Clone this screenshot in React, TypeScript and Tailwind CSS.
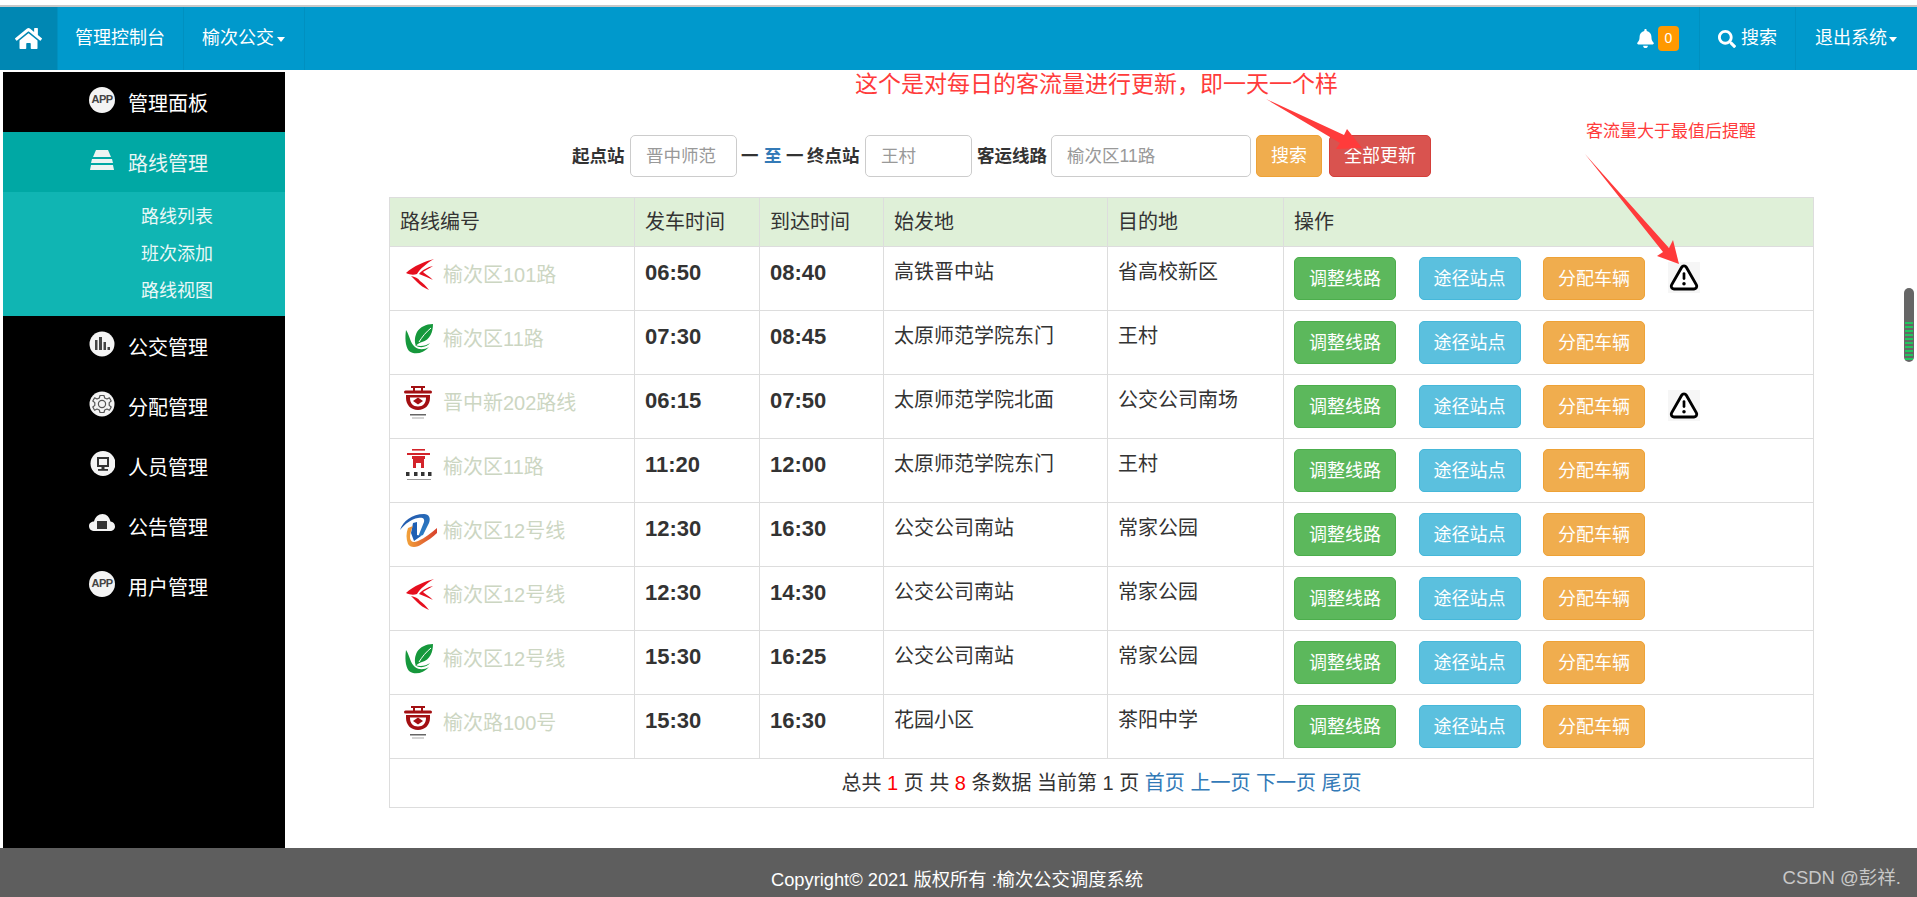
import { FaHome, FaBell, FaSearch } from "react-icons/fa";

type LogoKind = "wing" | "leaf" | "seal" | "gate" | "swirl";

const routes: { logo: LogoKind; name: string; start: string; end: string; from: string; to: string; warn?: boolean }[] = [
  { logo: "wing", name: "榆次区101路", start: "06:50", end: "08:40", from: "高铁晋中站", to: "省高校新区", warn: true },
  { logo: "leaf", name: "榆次区11路", start: "07:30", end: "08:45", from: "太原师范学院东门", to: "王村" },
  { logo: "seal", name: "晋中新202路线", start: "06:15", end: "07:50", from: "太原师范学院北面", to: "公交公司南场", warn: true },
  { logo: "gate", name: "榆次区11路", start: "11:20", end: "12:00", from: "太原师范学院东门", to: "王村" },
  { logo: "swirl", name: "榆次区12号线", start: "12:30", end: "16:30", from: "公交公司南站", to: "常家公园" },
  { logo: "wing", name: "榆次区12号线", start: "12:30", end: "14:30", from: "公交公司南站", to: "常家公园" },
  { logo: "leaf", name: "榆次区12号线", start: "15:30", end: "16:25", from: "公交公司南站", to: "常家公园" },
  { logo: "seal", name: "榆次路100号", start: "15:30", end: "16:30", from: "花园小区", to: "茶阳中学" },
];

function Logo({ kind }: { kind: LogoKind }) {
  return (
    <svg viewBox="0 0 37 36" className="w-[37px] h-[36px] shrink-0">
      {kind === "wing" && (
        <g fill="#e60f1e">
          <path d="M34 2C26 4 13 9 6 16C10 18 14 18 17 17C20 12 27 6 34 2Z" />
          <path d="M33 9C28 10 22 13 19 17C24 19 29 21 33 23C29 19 25 17 23 15C26 13 30 11 33 9Z" />
          <path d="M11 19C15 20 18 21 20 24C23 26 26 29 29 33C24 31 20 28 17 25C15 23 13 21 11 19Z" />
        </g>
      )}
      {kind === "leaf" && (
        <g fill="#16983c">
          <path d="M17 11C20 6 26 3 33 3C33 11 30 19 22 21C19 22 17 23 16 25C14 20 15 15 17 11Z" />
          <path d="M19 21C22 16 26 11 31 7" stroke="#fff" strokeWidth="1" fill="none" />
          <path d="M6 9C5 16 5 25 9 30C14 34 23 33 29 26C24 29 19 29 15 26C10 22 10 15 6 9Z" />
          <path d="M15 24C20 26 26 25 30 22C27 26 20 28 15 24Z" />
        </g>
      )}
      {kind === "seal" && (
        <g fill="#a30f12">
          <rect x="11" y="1" width="14" height="2" />
          <rect x="4" y="5.500" width="28" height="3" rx="1.500" />
          <rect x="13" y="3" width="2" height="3" />
          <rect x="21" y="3" width="2" height="3" />
          <path d="M6 10H30V13C30 20 25 25 18 25C11 25 6 20 6 13ZM10 12.500V13C10 18 13 21.500 18 21.500C23 21.500 26 18 26 13V12.500Z" />
          <path d="M18 12.500L23 16L18 19.500L13 16Z" />
          <rect x="10" y="29" width="16" height="1.500" fill="#666" />
          <rect x="12" y="32.500" width="12" height="1" fill="#aaa" />
        </g>
      )}
      {kind === "gate" && (
        <g>
          <g fill="#d3232a">
            <rect x="12" y="0" width="13" height="1.600" />
            <rect x="7" y="4" width="23" height="2" />
            <rect x="12" y="7" width="13" height="3" />
            <path d="M13 10H24V19H21V14H16V19H13Z" />
          </g>
          <g fill="#333">
            <rect x="6" y="23" width="3.500" height="4" />
            <rect x="14" y="23" width="3.500" height="4" />
            <rect x="21" y="23" width="3.500" height="4" />
            <rect x="28" y="23" width="3.500" height="4" />
            <rect x="7" y="30" width="24" height="1" fill="#999" />
          </g>
        </g>
      )}
      {kind === "swirl" && (
        <g>
          <defs>
            <linearGradient id="swirlBlue" x1="0" y1="0" x2="1" y2="1">
              <stop offset="0" stopColor="#1f4fa8" />
              <stop offset="1" stopColor="#2f86c9" />
            </linearGradient>
            <linearGradient id="swirlOrange" x1="0" y1="0" x2="1" y2="0">
              <stop offset="0" stopColor="#f2a33a" />
              <stop offset="1" stopColor="#d8402c" />
            </linearGradient>
          </defs>
          <path d="M0 17C3 8 12 1 24 1C29 1 31 5 29 10L23 22L18 24L24 9C25 5 22 4 18 5C11 6 5 11 0 17Z" fill="url(#swirlBlue)" />
          <path d="M13 10L17 9L17 22L21 23L14 28L11 20Z" fill="#1f5fb3" />
          <path d="M8 15C6 20 6 26 8 31C10 35 17 35 22 31C27 28 33 24 37 20L37 15C31 20 25 25 18 28C13 30 11 29 10 25C10 21 11 17 13 13Z" fill="url(#swirlOrange)" />
        </g>
      )}
    </svg>
  );
}

function AppIcon() {
  return (
    <div className="w-[26px] h-[26px] rounded-full bg-[#f4f4f4] flex items-center justify-center text-[11px] font-bold text-[#444] leading-none tracking-[-0.5px]">
      APP
    </div>
  );
}

function SideIcon({ kind }: { kind: string }) {
  if (kind === "app") return <AppIcon />;
  return (
    <svg viewBox="0 0 26 26" className="w-[26px] h-[26px]">
      {kind === "stack" && (
        <g fill="#eef4f2">
          <path d="M7 3H19L22 10H4Z" />
          <path d="M3 12H23L24 16H2Z" />
          <path d="M2 18H24L25 23H1Z" />
        </g>
      )}
      {kind === "chart" && (
        <g>
          <circle cx="13" cy="13" r="12.500" fill="#f4f4f4" />
          <g fill="#444">
            <rect x="6" y="9" width="2.500" height="10" />
            <rect x="10" y="6" width="3" height="13" />
            <rect x="14.500" y="11" width="2.500" height="8" />
            <rect x="18.500" y="16" width="2.500" height="3" />
          </g>
        </g>
      )}
      {kind === "gear" && (
        <g>
          <circle cx="13" cy="13" r="12.500" fill="#f4f4f4" />
          <path d="M11 4.500H15L15.700 7L18 8L20.400 6.800L22.200 10L20.200 11.600V14.400L22.200 16L20.400 19.200L18 18L15.700 19L15 21.500H11L10.300 19L8 18L5.600 19.200L3.800 16L5.800 14.400V11.600L3.800 10L5.600 6.800L8 8L10.300 7Z" fill="none" stroke="#555" strokeWidth="1.200" strokeLinejoin="round" />
          <circle cx="13" cy="13" r="3.600" fill="none" stroke="#555" strokeWidth="1.200" />
        </g>
      )}
      {kind === "monitor" && (
        <g>
          <circle cx="14" cy="12.500" r="12.500" fill="#f4f4f4" />
          <path d="M8 6H20V16H8ZM10 8V14H18V8Z" fill="#333" fillRule="evenodd" />
          <rect x="12.500" y="16" width="3" height="2" fill="#333" />
          <rect x="9" y="18" width="10" height="1.800" fill="#333" />
        </g>
      )}
      {kind === "cloud" && (
        <g>
          <path d="M6 20C2 20 0 18 0 15C0 12 2.500 10.500 5 10.500C6 6 9.500 3 13.500 3C17.500 3 20.500 6 21.500 10.500C24 11 26 12.500 26 15.500C26 18 24 20 21 20Z" fill="#f4f4f4" />
          <rect x="8" y="10" width="10" height="8" fill="#333" />
        </g>
      )}
    </svg>
  );
}

function SideItem({ icon, label, active }: { icon: string; label: string; active?: boolean }) {
  return (
    <div className={"h-[60px] flex items-center pl-[86px] pt-[3px] gap-[13px] text-[20px] " + (active ? "bg-[#00a8a4] text-[#eaf6f5]" : "text-white")}>
      <div className="-mt-[8px]">
        <SideIcon kind={icon} />
      </div>
      <span>{label}</span>
    </div>
  );
}

function ActionBtn({ label, color }: { label: string; color: string }) {
  return (
    <button className={"h-[43px] w-[102px] rounded-[5px] border text-white text-[18px] mr-[22.5px] align-top " + color}>
      {label}
    </button>
  );
}

function WarnIcon() {
  return (
    <svg viewBox="0 0 32 32" className="inline-block align-top mt-[5px] w-[32px] h-[31px] bg-[#f6f6f6]">
      <path d="M13.600 5.400C14.700 3.500 17.300 3.500 18.400 5.400L28.800 23.600C29.900 25.500 28.600 27.800 26.400 27.800H5.600C3.400 27.800 2.100 25.500 3.200 23.600Z" fill="#fff" stroke="#000" strokeWidth="3" strokeLinejoin="round" />
      <rect x="14.600" y="10.500" width="2.800" height="8" rx="1.400" fill="#000" />
      <circle cx="16" cy="22.500" r="1.800" fill="#000" />
    </svg>
  );
}

export default function App() {
  return (
    <div className="relative h-[897px] overflow-hidden bg-white flex flex-col text-[#333] font-['Liberation_Sans','Noto_Sans_CJK_SC',sans-serif]">
      {/* top strip */}
      <div className="h-[5px] bg-white" />
      <div className="h-[2px] bg-[#c8c8c8]" />

      {/* Navbar */}
      <nav className="h-[63px] bg-[#0099cc] text-white text-[18px] flex items-stretch shrink-0">
        <div className="w-[57px] bg-[#0087b3] flex items-center justify-center">
          <FaHome size={27} />
        </div>
        <div className="w-[126px] border-l border-[#0090c0] flex items-center pl-[17px]">管理控制台</div>
        <div className="w-[122px] border-x border-[#0090c0] flex items-center pl-[18px]">
          榆次公交
          <span className="ml-[3px] mt-[2px] border-x-[4.500px] border-x-transparent border-t-[5px] border-t-white" />
        </div>
        <div className="ml-auto w-[90px] flex items-center pl-[27px]">
          <FaBell size={19} />
          <span className="ml-[3px] w-[21px] h-[25px] rounded-[4px] bg-[#ff9900] flex items-center justify-center text-[14px]">0</span>
        </div>
        <div className="w-[96px] border-l border-[#0090c0] flex items-center pl-[18px]">
          <FaSearch size={18} />
          <span className="ml-[5px]">搜索</span>
        </div>
        <div className="w-[122px] border-l border-[#0090c0] flex items-center pl-[19px]">
          退出系统
          <span className="ml-[2px] mt-[2px] border-x-[4.500px] border-x-transparent border-t-[5px] border-t-white" />
        </div>
      </nav>

      <div className="flex flex-1 min-h-0 bg-white">
        {/* Sidebar */}
        <aside className="ml-[3px] mt-[2px] w-[282px] bg-black shrink-0">
          <SideItem icon="app" label="管理面板" />
          <SideItem icon="stack" label="路线管理" active />
          <div className="h-[124px] bg-[#10b5b3] pt-[7px] pl-[138px] text-[18px] leading-[37px] text-[#eaf8f7]">
            <div>路线列表</div>
            <div>班次添加</div>
            <div>路线视图</div>
          </div>
          <SideItem icon="chart" label="公交管理" />
          <SideItem icon="gear" label="分配管理" />
          <SideItem icon="monitor" label="人员管理" />
          <SideItem icon="cloud" label="公告管理" />
          <SideItem icon="app" label="用户管理" />
        </aside>

        {/* Main */}
        <main className="flex-1 min-w-0 pt-[65px]">
          <div className="ml-[287px] flex items-center h-[42px] text-[17.5px]">
            <b className="w-[58px]">起点站</b>
            <input readOnly placeholder="晋中师范" className="w-[107px] h-[42px] px-[15px] border border-[#ccc] rounded-[5px] placeholder:text-[#999] outline-none" />
            <b className="ml-[4px] w-[17px]">一</b>
            <b className="ml-[6px] w-[18px] text-[#337ab7]">至</b>
            <b className="ml-[4px] w-[17px]">一</b>
            <b className="ml-[4px] w-[55px]">终点站</b>
            <input readOnly placeholder="王村" className="w-[107px] h-[42px] ml-[3px] px-[15px] border border-[#ccc] rounded-[5px] placeholder:text-[#999] outline-none" />
            <b className="ml-[5px] w-[71px]">客运线路</b>
            <input readOnly placeholder="榆次区11路" className="w-[200px] h-[42px] ml-[3px] px-[15px] border border-[#ccc] rounded-[5px] placeholder:text-[#999] outline-none" />
            <button className="ml-[5px] w-[66px] h-[42px] rounded-[5px] bg-[#f0ad4e] border border-[#eea236] text-white text-[18px]">搜索</button>
            <button className="ml-[7px] w-[102px] h-[42px] rounded-[5px] bg-[#d9534f] border border-[#d43f3a] text-white text-[18px]">全部更新</button>
          </div>

          <table className="ml-[104px] mt-[20px] w-[1425px] table-fixed border-collapse text-[20px] leading-[28px] border border-[#ddd]">
            <colgroup>
              <col className="w-[245px]" />
              <col className="w-[125px]" />
              <col className="w-[124px]" />
              <col className="w-[224px]" />
              <col className="w-[176px]" />
              <col />
            </colgroup>
            <thead>
              <tr className="bg-[#dff0d8] h-[49px]">
                {["路线编号", "发车时间", "到达时间", "始发地", "目的地", "操作"].map((h) => (
                  <th key={h} className="border border-[#ddd] px-[10px] text-left font-normal">{h}</th>
                ))}
              </tr>
            </thead>
            <tbody>
              {routes.map((r, i) => (
                <tr key={i} className="h-[64px]">
                  <td className="border border-[#ddd] pl-[10px] py-[10px] align-top">
                    <div className="flex">
                      <Logo kind={r.logo} />
                      <span className="ml-[6px] pt-[4px] text-[#ccd6c2]">{r.name}</span>
                    </div>
                  </td>
                  <td className="border border-[#ddd] px-[10px] pt-[12px] pb-[8px] align-top font-bold text-[22px]">{r.start}</td>
                  <td className="border border-[#ddd] px-[10px] pt-[12px] pb-[8px] align-top font-bold text-[22px]">{r.end}</td>
                  <td className="border border-[#ddd] px-[10px] pt-[11px] pb-[9px] align-top">{r.from}</td>
                  <td className="border border-[#ddd] px-[10px] pt-[11px] pb-[9px] align-top">{r.to}</td>
                  <td className="border border-[#ddd] px-[10px] py-[10px] align-top whitespace-nowrap">
                    <ActionBtn label="调整线路" color="bg-[#5cb85c] border-[#4cae4c]" />
                    <ActionBtn label="途径站点" color="bg-[#5bc0de] border-[#46b8da]" />
                    <ActionBtn label="分配车辆" color="bg-[#f0ad4e] border-[#eea236]" />
                    {r.warn && <WarnIcon />}
                  </td>
                </tr>
              ))}
              <tr className="h-[49px]">
                <td colSpan={6} className="border border-[#ddd] text-center">
                  总共 <span className="text-[#ff0000]">1</span> 页 共 <span className="text-[#ff0000]">8</span> 条数据 当前第 1 页{" "}
                  <a className="text-[#337ab7]">首页</a> <a className="text-[#337ab7]">上一页</a>{" "}
                  <a className="text-[#337ab7]">下一页</a> <a className="text-[#337ab7]">尾页</a>
                </td>
              </tr>
            </tbody>
          </table>
        </main>
      </div>

      {/* Footer */}
      <footer className="h-[49px] bg-[#5e5e5e] text-white text-[18.3px] flex items-center justify-center pt-[15px] pr-[3px] shrink-0">
        Copyright© 2021 版权所有 :榆次公交调度系统
      </footer>

      {/* Annotations over the page */}
      <div className="absolute left-[855px] top-[69px] text-[23px] leading-[30px] text-[#ff3b3b] whitespace-nowrap">
        这个是对每日的客流量进行更新，即一天一个样
      </div>
      <div className="absolute left-[1586px] top-[120px] text-[17px] leading-[24px] text-[#ff3b3b] whitespace-nowrap">
        客流量大于最值后提醒
      </div>
      <svg className="absolute inset-0 w-[1917px] h-[897px] pointer-events-none">
        <path d="M1266 99L1344 135L1347 129L1362 148L1336 149L1340 143Z" fill="#ff3b3b" />
        <path d="M1585 154L1669 248L1673 240L1679 264L1657 256L1663 252Z" fill="#ff3b3b" />
      </svg>
      <div className="absolute right-[16px] top-[868px] text-[18.5px] leading-[20px] text-[#c8c8c8] whitespace-nowrap">
        CSDN @彭祥.
      </div>

      {/* Floating scrollbar widget */}
      <div className="absolute left-[1904px] top-[288px] w-[10px] h-[74px] rounded-[5px] bg-[#666] flex flex-col justify-end gap-[1.500px] px-[1px] pb-[2px] overflow-hidden">
        {Array.from({ length: 10 }).map((_, i) => (
          <div key={i} className="h-[2.500px] bg-[#22c55e] shrink-0" />
        ))}
      </div>
    </div>
  );
}
